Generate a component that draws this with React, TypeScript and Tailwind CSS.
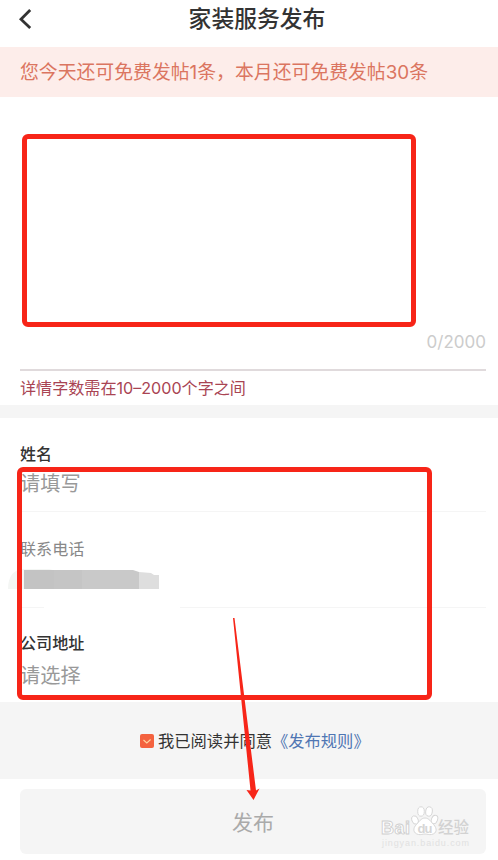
function Watermark() {
  return (
    <div className="absolute left-[379px] top-[802px] h-[48px] w-[96px]">
      <svg viewBox="0 0 96 48" className="h-full w-full" fill="#fff" stroke="#d4d4d4" strokeWidth="0.9">
        <ellipse cx="36" cy="18" rx="3.1" ry="4.3" transform="rotate(-20 36 18)" />
        <ellipse cx="42" cy="9.500" rx="3.3" ry="4.7" />
        <ellipse cx="50" cy="9.500" rx="3.3" ry="4.7" transform="rotate(8 50 9.500)" />
        <ellipse cx="55.500" cy="17.500" rx="3" ry="4.4" transform="rotate(22 55.500 17.500)" />
        <path d="M46 16c4 0 6 4 8.500 6.500 4 4 3.500 9-2 10-2.500.5-4-.5-6.500-.5s-4 1-6.500.5c-5.500-1-6-6.500-2-10C40 20 42 16 46 16Z" />
        <text x="2" y="31.500" fontSize="18" textLength="29" className="font-['Liberation_Sans'] font-bold" stroke="#cfcfcf" strokeWidth="0.9">Bai</text>
        <text x="38.500" y="30.500" fontSize="13" textLength="15" className="font-['Liberation_Sans'] font-bold" fill="#d6d6d6" stroke="none">du</text>
        <text x="59" y="30.500" fontSize="15.500" textLength="31" className="font-['Noto_Sans_CJK_SC'] font-medium" fill="#d2d2d2" stroke="none">经验</text>
        <text x="3" y="43.500" fontSize="9" textLength="87" className="font-['Liberation_Sans']" fill="#e1e1e1" stroke="none">jingyan.baidu.com</text>
      </svg>
    </div>
  );
}

export default function App() {
  return (
    <div className="relative flex h-[860px] w-[498px] flex-col overflow-hidden bg-white font-['Inter','Noto_Sans_CJK_SC',sans-serif] text-[#333]">
      <header className="grid h-[47px] shrink-0 grid-cols-[1fr_auto_1fr] items-center pb-[8px] pl-[18px]">
        <svg viewBox="0 0 14 20" className="-mt-[2px] h-5 w-3.5" fill="none" stroke="#333" strokeWidth="2.8">
          <path d="M12.200 1 3 10.200l9.200 8.800" />
        </svg>
        <h1 className="-ml-[1px] mr-[1px] text-[22.8px] font-medium leading-none">家装服务发布</h1>
      </header>

      <div className="flex h-[50px] shrink-0 items-center whitespace-nowrap bg-[#fdedea] pl-5 pt-[3px] text-[18.85px] leading-none text-[#db7560]">
        您今天还可免费发帖1条，本月还可免费发帖30条
      </div>

      <section className="flex h-[308px] shrink-0 flex-col px-5 pr-3">
        <div className="mt-[37px] ml-[2px] h-[193px] w-[394px] rounded-[6px] border-[5px] border-[#f72518]" />
        <div className="mt-[5px] self-end text-[17px] leading-[20px] text-[#ccc]">0/2000</div>
        <div className="mt-[17px] h-[2px] shrink-0 bg-[#e0dadc]" />
        <p className="mt-[7px] text-[16.1px] leading-[20px] text-[#a94453]">详情字数需在10–2000个字之间</p>
      </section>

      <div className="h-[13px] shrink-0 bg-[#f5f5f5]" />

      <section className="flex h-[284px] shrink-0 flex-col pl-5 pr-3">
        <div className="flex h-[94px] flex-col border-b border-[#f5f5f5] pt-[26px]">
          <label className="text-[16px] font-medium leading-[20px]">姓名</label>
          <span className="mt-[8px] text-[20.2px] leading-[24px] text-[#999]">请填写</span>
        </div>
        <div className="flex h-[96px] flex-col border-b border-[#f5f5f5] pt-[27px]">
          <label className="text-[16.1px] leading-[20px] text-[#888]">联系电话</label>
          <svg viewBox="0 0 172 40" className="-ml-3 mt-[9px] h-[40px] w-[172px] shrink-0">
            <path d="M36 30h136v10H36Z" fill="#fff" />
            <path d="M0 21C0 9 5 1 16 1h25l8 2v18Z" fill="#f4f6f4" />
            <path d="M16 2h30v19H16Z" fill="#c3c3c3" />
            <path d="M46 2h28v19H46Z" fill="#c5c5c5" />
            <path d="M74 2h51l6 2v17H74Z" fill="#c9c9c9" />
            <path d="M131 4l12 1 3 2h5v14h-20Z" fill="#dedede" />
          </svg>
        </div>
        <div className="flex flex-col pt-[25px]">
          <label className="text-[16.1px] font-medium leading-[20px]">公司地址</label>
          <span className="mt-[11px] text-[20.2px] leading-[24px] text-[#999]">请选择</span>
        </div>
      </section>

      <div className="flex h-[77px] shrink-0 items-center bg-[#f5f5f5] pl-[140px] text-[16.300px] leading-none">
        <span className="mr-[4px] flex h-[14px] w-[14px] items-center justify-center rounded-[2px] bg-[#f4623f]">
          <svg viewBox="0 0 14 14" className="h-3.5 w-3.5" fill="none" stroke="#ffd5a0" strokeWidth="1.1">
            <path d="m3.500 6 3.300 3 3.800-3.500" />
          </svg>
        </span>
        <span className="pt-[1px]">我已阅读并同意</span>
        <span className="pt-[1px] text-[#4f76b3]">《发布规则》</span>
      </div>

      <button className="ml-5 mt-[10px] h-[65px] w-[466px] shrink-0 rounded-[6px] bg-[#f5f5f5] pt-[1px] text-[21px] leading-none text-[#aaa]">发布</button>

      <Watermark />
      <div className="absolute left-[17px] top-[467px] h-[233px] w-[415px] rounded-[6px] border-[5px] border-[#f72518]" />
      <svg viewBox="0 0 30 184" className="absolute left-[231px] top-[617px] h-[184px] w-[30px]">
        <path d="M2 1h1.500L25 173.500l3.500-2L22.500 183 15.500 173l4 .5Z" fill="#f72518" />
      </svg>
    </div>
  );
}
